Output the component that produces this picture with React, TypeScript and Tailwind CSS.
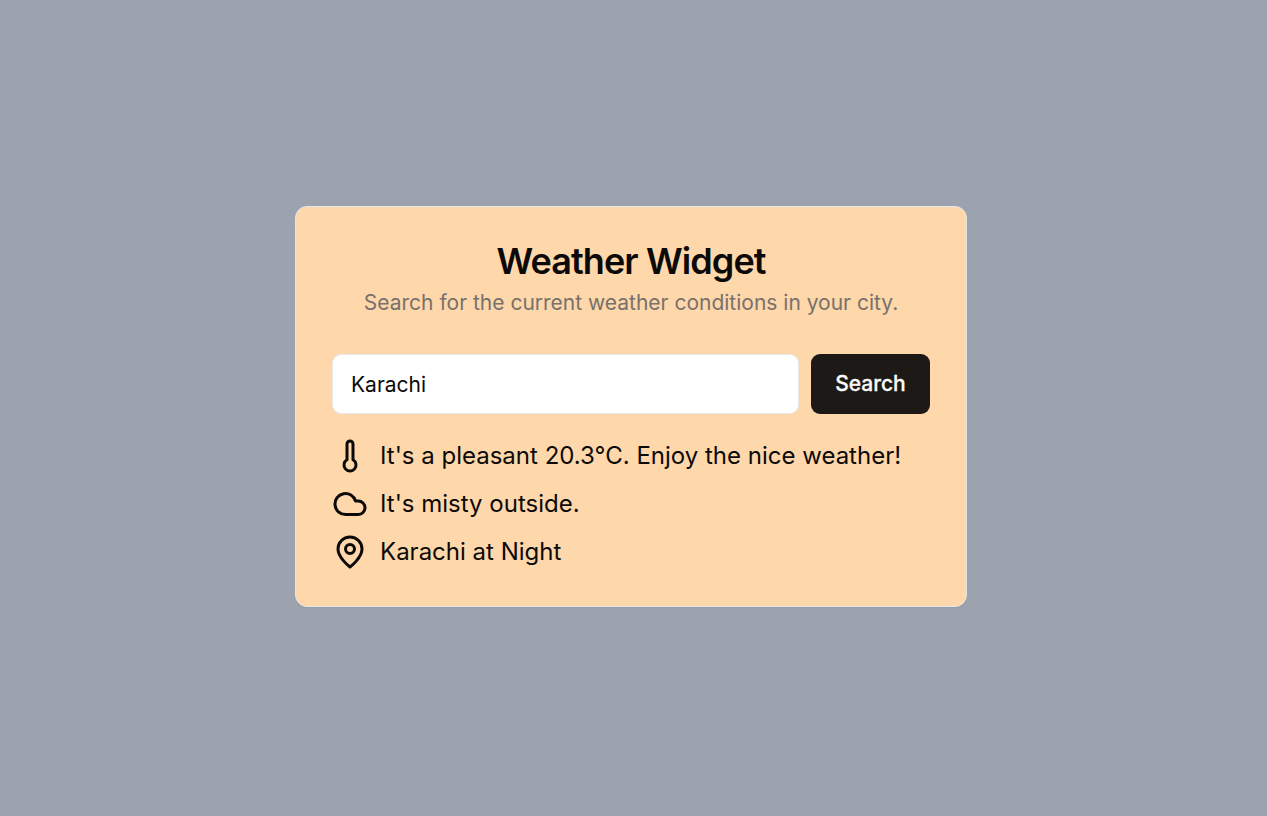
import React, { useState } from "react";
import { Cloud, Thermometer } from "lucide-react";

function Pin() {
  return (
    <svg width="36" height="36" viewBox="0 0 24 24" fill="none" stroke="currentColor" strokeWidth="2" strokeLinecap="round" strokeLinejoin="round">
      <path d="M20 10c0 6-8 12-8 12s-8-6-8-12a8 8 0 0 1 16 0Z" />
      <circle cx="12" cy="10" r="3" />
    </svg>
  );
}

export default function App() {
  const [city, setCity] = useState("Karachi");
  return (
    <main className="flex h-screen items-center justify-center bg-[#9ca3af] pr-[5px] pb-[3px] font-['Inter',sans-serif] text-[#0c0a09]">
      <section className="h-[401px] w-[672px] rounded-[12px] border border-[#e5e7eb] bg-[#fed7aa] px-9 pt-9 shadow-[0_1px_2px_rgba(0,0,0,0.05)]">
        <header className="text-center">
          <h1 className="text-[36px] leading-[36px] font-semibold tracking-[-0.9px]">Weather Widget</h1>
          <p className="mt-[9px] text-[21px] leading-[30px] text-[#78716c]">
            Search for the current weather conditions in your city.
          </p>
        </header>
        <form className="mt-9 flex h-[60px] gap-3" onSubmit={(e) => e.preventDefault()}>
          <input
            className="min-w-0 flex-1 rounded-[9px] border border-[#e5e7eb] bg-white px-[18px] pt-[2px] text-[21px] leading-[30px] outline-none"
            value={city}
            onChange={(e) => setCity(e.target.value)}
          />
          <button className="w-[119px] rounded-[9px] bg-[#1c1917] text-[21px] leading-[30px] font-medium text-[#fafaf9] [-webkit-text-stroke:0.3px_#fafaf9]">Search</button>
        </form>
        <ul className="mt-6 flex flex-col gap-3 text-[24px] leading-[36px]">
          <li className="flex items-center gap-3"><Thermometer size={36} />It's a pleasant 20.3°C. Enjoy the nice weather!</li>
          <li className="flex items-center gap-3"><Cloud size={36} />It's misty outside.</li>
          <li className="flex items-center gap-3"><Pin />Karachi at Night</li>
        </ul>
      </section>
    </main>
  );
}
